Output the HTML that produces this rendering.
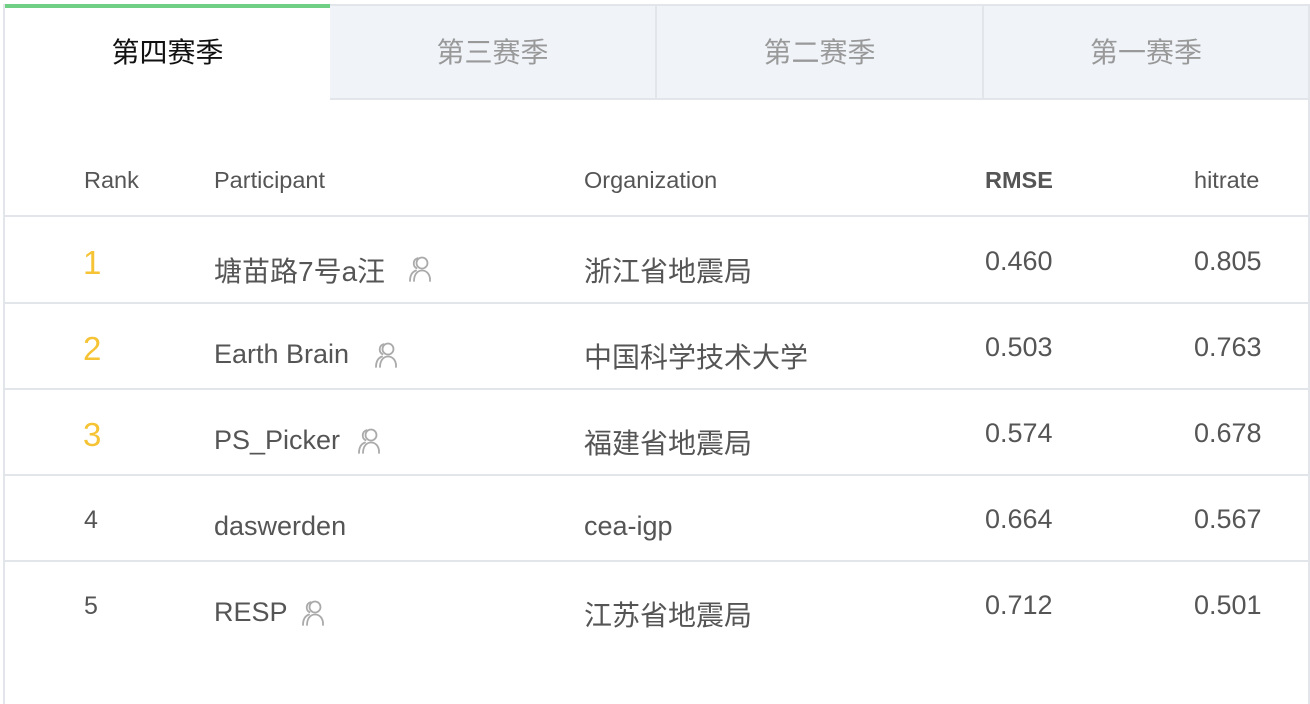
<!DOCTYPE html>
<html><head><meta charset="utf-8"><style>
*{margin:0;padding:0;box-sizing:border-box}
body{width:1310px;height:660px;background:#fff;font-family:"Liberation Sans","Noto Sans CJK SC",sans-serif;color:#555;position:relative;overflow:hidden}
.frame{position:absolute;left:3px;top:4px;width:1307px;height:700px;border-left:2px solid #e2e6ea;border-right:2px solid #e2e6ea}
.tab{position:absolute;top:4px;height:96px;background:#f0f4f9;border:2px solid #e2e6ea;border-left:none;font-size:28px;color:#999;text-align:center;line-height:94px}
.tab.act{background:#fff;border:none;border-top:4px solid #6fcf85;color:#111;line-height:90px}
.t{position:absolute;white-space:nowrap}
.h{font-size:23.5px;top:167px}
.line{position:absolute;left:3px;width:1307px;height:2px;background:#e2e6ea}
.d{font-size:27px}
.c{font-size:28px}
.g{color:#f6c334;font-size:33px}
svg{position:absolute}
</style></head><body>
<div class="frame"></div>
<div class="tab act" style="left:5px;width:325px">第四赛季</div>
<div class="tab" style="left:330px;width:327px;border-left:none">第三赛季</div>
<div class="tab" style="left:655px;width:329px;border-left:2px solid #e2e6ea">第二赛季</div>
<div class="tab" style="left:982px;width:328px;border-left:2px solid #e2e6ea">第一赛季</div>

<div class="t h" style="left:84px">Rank</div>
<div class="t h" style="left:214px">Participant</div>
<div class="t h" style="left:584px">Organization</div>
<div class="t h" style="left:985px;font-weight:bold">RMSE</div>
<div class="t h" style="left:1194px">hitrate</div>
<div class="line" style="top:215px"></div>
<div class="line" style="top:302px"></div>
<div class="line" style="top:388px"></div>
<div class="line" style="top:474px"></div>
<div class="line" style="top:560px"></div>

<div class="t g" style="left:83px;top:244px">1</div>
<div class="t c" style="left:214px;top:250px">塘苗路7号a汪</div>
<div class="t c" style="left:584px;top:250px">浙江省地震局</div>
<div class="t d" style="left:985px;top:246px">0.460</div>
<div class="t d" style="left:1194px;top:246px">0.805</div>

<div class="t g" style="left:83px;top:330px">2</div>
<div class="t d" style="left:214px;top:339px">Earth Brain</div>
<div class="t c" style="left:584px;top:336px">中国科学技术大学</div>
<div class="t d" style="left:985px;top:332px">0.503</div>
<div class="t d" style="left:1194px;top:332px">0.763</div>

<div class="t g" style="left:83px;top:416px">3</div>
<div class="t d" style="left:214px;top:425px">PS_Picker</div>
<div class="t c" style="left:584px;top:422px">福建省地震局</div>
<div class="t d" style="left:985px;top:418px">0.574</div>
<div class="t d" style="left:1194px;top:418px">0.678</div>

<div class="t d" style="left:84px;top:506px;font-size:25px">4</div>
<div class="t d" style="left:214px;top:511px">daswerden</div>
<div class="t d" style="left:584px;top:511px">cea-igp</div>
<div class="t d" style="left:985px;top:504px">0.664</div>
<div class="t d" style="left:1194px;top:504px">0.567</div>

<div class="t d" style="left:84px;top:592px;font-size:25px">5</div>
<div class="t d" style="left:214px;top:597px">RESP</div>
<div class="t c" style="left:584px;top:594px">江苏省地震局</div>
<div class="t d" style="left:985px;top:590px">0.712</div>
<div class="t d" style="left:1194px;top:590px">0.501</div>

<svg width="0" height="0"><defs><g id="ic" fill="none" stroke="#aaa" stroke-width="1.8" stroke-linecap="round"><circle cx="15" cy="8" r="5.5"/><path d="M10.5 3.2a5.5 5.5 0 0 0-1 10"/><path d="M3 26c0-5 2-9 6-10.5"/><path d="M7 26c0-6 3-10.5 8-10.5s7.5 4 8 8"/><path d="M23 24v2"/></g></defs></svg>
<svg style="left:407px;top:255px" width="30" height="28"><use href="#ic"/></svg>
<svg style="left:373px;top:341px" width="30" height="28"><use href="#ic"/></svg>
<svg style="left:356px;top:427px" width="30" height="28"><use href="#ic"/></svg>
<svg style="left:300px;top:599px" width="30" height="28"><use href="#ic"/></svg>
</body></html>
